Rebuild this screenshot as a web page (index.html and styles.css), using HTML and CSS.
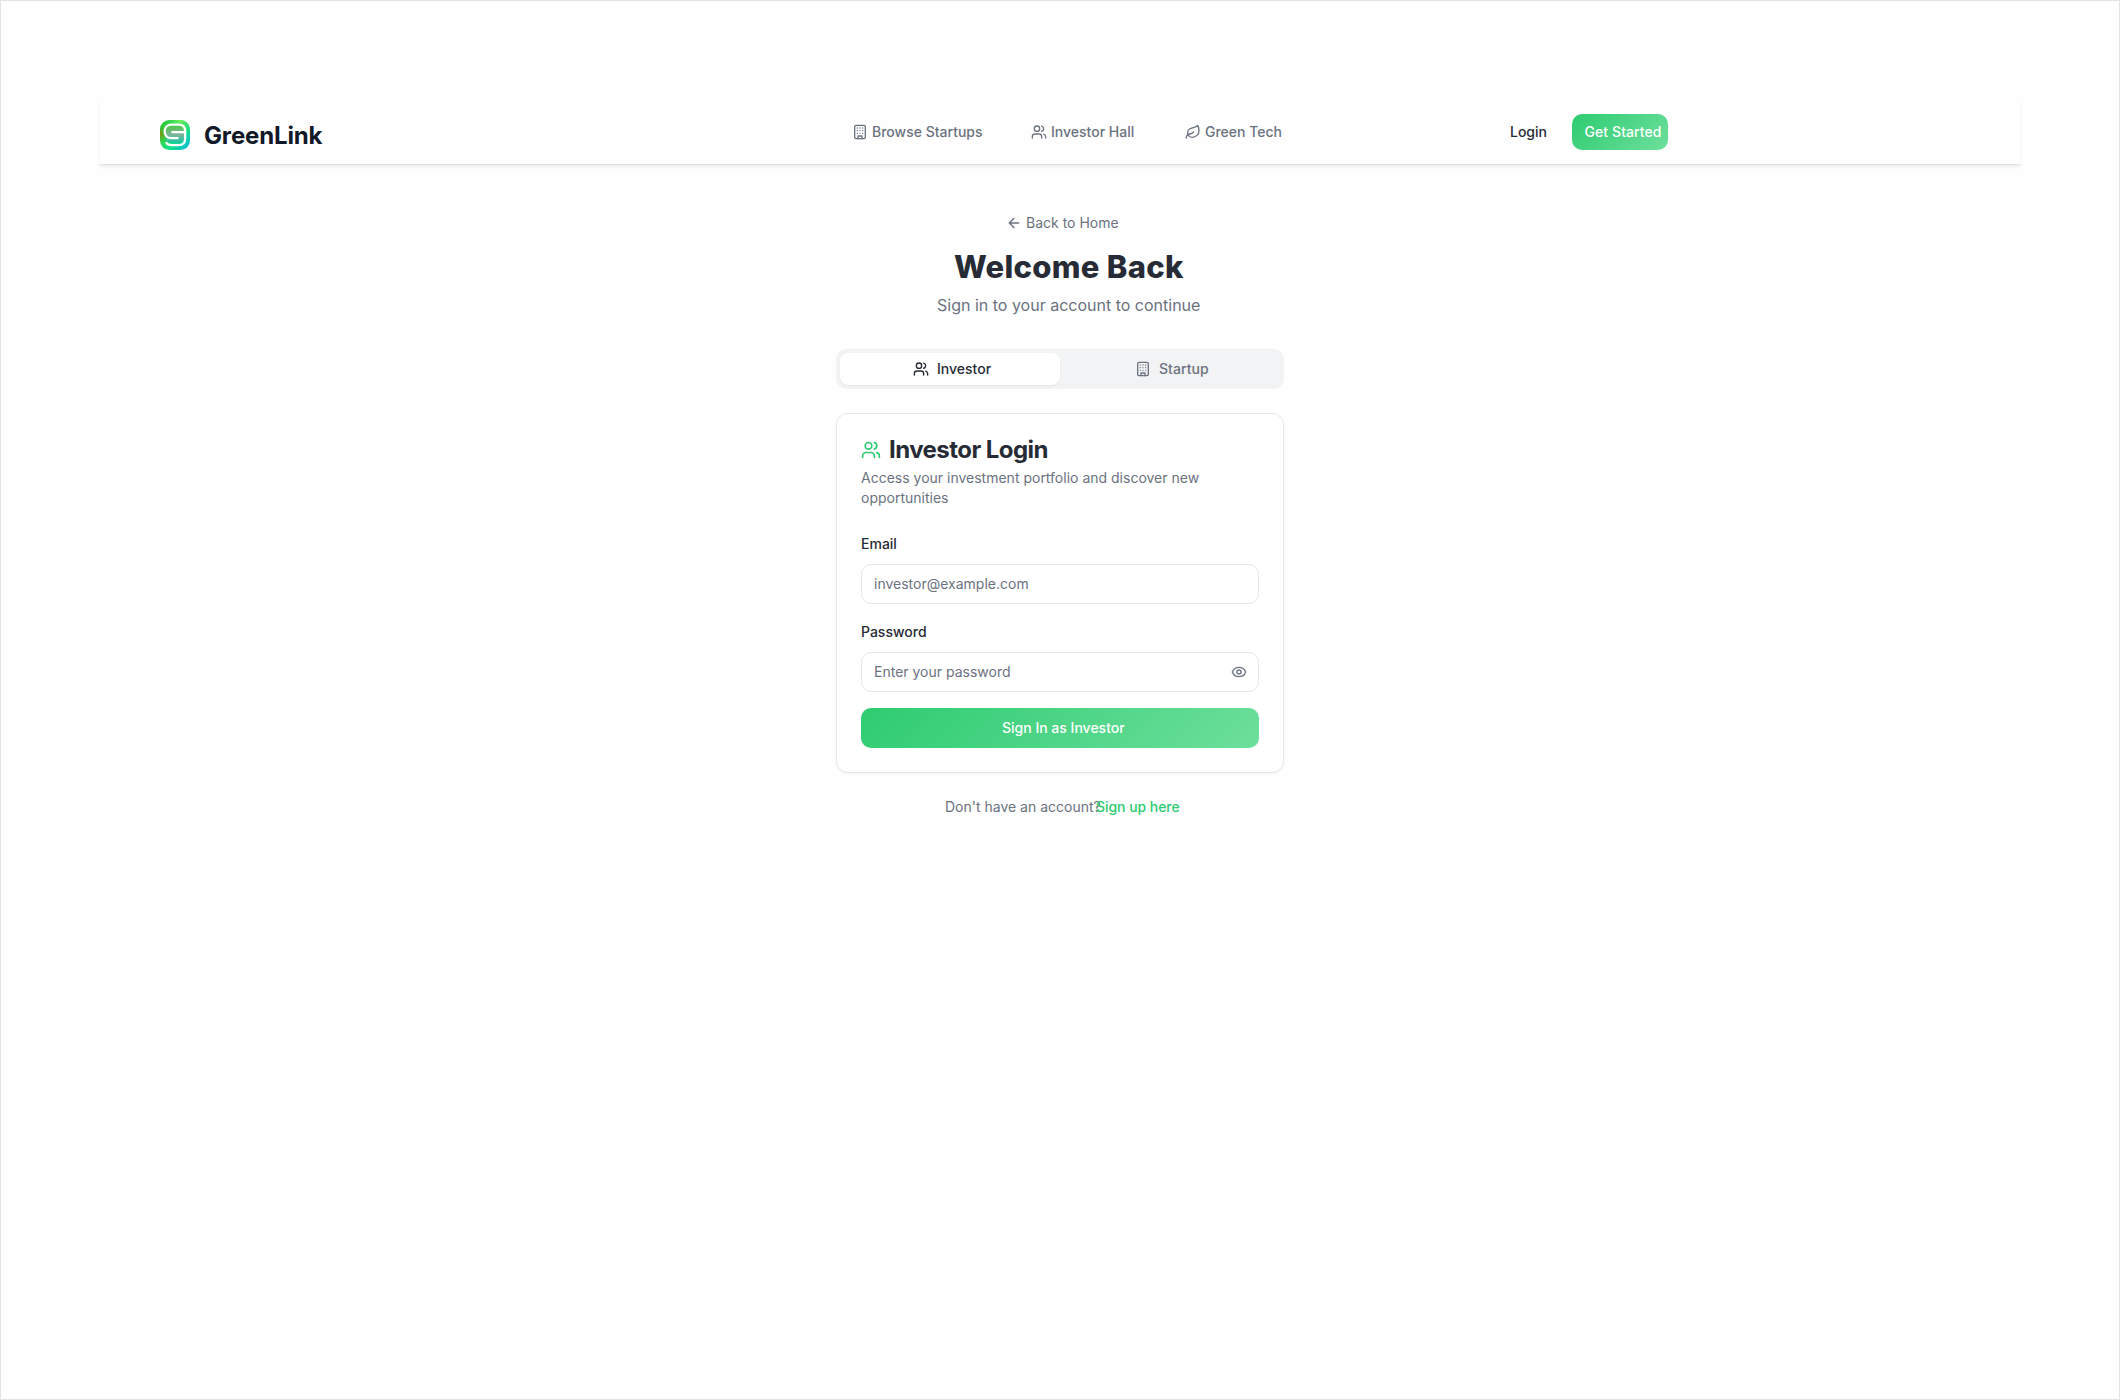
FILE: index.html
```html
<!DOCTYPE html>
<html lang="en">
<head>
<meta charset="utf-8">
<title>GreenLink – Login</title>
<link rel="stylesheet" href="styles.css">
</head>
<body>
<svg class="defs" width="0" height="0" aria-hidden="true">
  <symbol id="building" viewBox="0 0 24 24"><rect x="4" y="2" width="16" height="20" rx="2"/><path d="M9 22v-4h6v4M8 6h.01M16 6h.01M12 6h.01M12 10h.01M12 14h.01M16 10h.01M16 14h.01M8 10h.01M8 14h.01"/></symbol>
  <symbol id="users" viewBox="0 0 24 24"><path d="M16 21v-2a4 4 0 0 0-4-4H6a4 4 0 0 0-4 4v2"/><circle cx="9" cy="7" r="4"/><path d="M22 21v-2a4 4 0 0 0-3-3.87M16 3.13a4 4 0 0 1 0 7.75"/></symbol>
  <symbol id="leaf" viewBox="0 0 24 24"><path d="M11 20A7 7 0 0 1 9.8 6.1C15.5 5 17 4.48 19 2c1 2 2 4.18 2 8 0 5.5-4.78 10-10 10Z"/><path d="M2 21c0-3 1.85-5.36 5.08-6C9.5 14.52 12 13 13 12"/></symbol>
  <symbol id="arrow" viewBox="0 0 24 24"><path d="m12 19-7-7 7-7M19 12H5"/></symbol>
  <symbol id="eye" viewBox="0 0 24 24"><path d="M2.06 12.35a1 1 0 0 1 0-.7 10.75 10.75 0 0 1 19.88 0 1 1 0 0 1 0 .7 10.75 10.75 0 0 1-19.88 0"/><circle cx="12" cy="12" r="3"/></symbol>
</svg>
<div class="page">
  <header class="header">
    <div class="brand">
      <svg class="logo" viewBox="0 0 30 30">
        <defs>
          <linearGradient id="lg" x1="0" y1="0" x2="1" y2="1"><stop offset="0" stop-color="#24c22c"/><stop offset=".35" stop-color="#35d957"/><stop offset=".65" stop-color="#10e08a"/><stop offset="1" stop-color="#08b4f0"/></linearGradient>
          <linearGradient id="ls" x1="0" y1="0" x2="0" y2="1"><stop offset="0" stop-color="#4fc64a"/><stop offset=".5" stop-color="#7fb49a"/><stop offset="1" stop-color="#12c7a0"/></linearGradient>
          <radialGradient id="lo" cx="0" cy=".47" r=".35"><stop offset="0" stop-color="#8f8f10"/><stop offset="1" stop-color="#1fc02c" stop-opacity="0"/></radialGradient>
          <radialGradient id="lt" cx=".68" cy="0" r=".5"><stop offset="0" stop-color="#74f25c"/><stop offset="1" stop-color="#35e060" stop-opacity="0"/></radialGradient>
        </defs>
        <rect width="30" height="30" rx="9.5" fill="url(#lg)"/>
        <rect width="30" height="30" rx="9.5" fill="url(#lo)"/>
        <rect width="30" height="30" rx="9.5" fill="url(#lt)"/>
        <rect x="6" y="6" width="18" height="17" rx="5" fill="url(#ls)"/>
        <path d="M25.200 12.600V11C25.200 7 22.500 4.700 18.500 4.700H11.500C7.200 4.700 4.600 7.300 4.600 11.200S7.200 18.200 11 18.200H18.500M11.500 12.200H25.200V18.500C25.200 22.800 22.500 25.200 18.500 25.200H12C9 25.200 7 24.500 6 22.300" fill="none" stroke="#fff" stroke-width="2.300"/>
      </svg>
      <span class="brand-name">GreenLink</span>
    </div>
    <nav class="nav">
      <a class="nav-item"><svg class="icon"><use href="#building"/></svg><span>Browse Startups</span></a>
      <a class="nav-item"><svg class="icon"><use href="#users"/></svg><span>Investor Hall</span></a>
      <a class="nav-item"><svg class="icon"><use href="#leaf"/></svg><span>Green Tech</span></a>
    </nav>
    <div class="actions"><a class="login">Login</a><a class="start">Get Started</a></div>
  </header>
  <main class="main">
    <a class="back"><svg class="icon"><use href="#arrow"/></svg><span>Back to Home</span></a>
    <h1 class="title">Welcome Back</h1>
    <p class="subtitle">Sign in to your account to continue</p>
    <div class="tabs">
      <div class="tab active"><svg class="icon"><use href="#users"/></svg><span>Investor</span></div>
      <div class="tab"><svg class="icon"><use href="#building"/></svg><span>Startup</span></div>
    </div>
    <section class="card">
      <h2 class="card-title"><svg class="icon large"><use href="#users"/></svg><span>Investor Login</span></h2>
      <p class="desc">Access your investment portfolio and discover new<br>opportunities</p>
      <div class="label">Email</div>
      <div class="input"><span>investor@example.com</span></div>
      <div class="label">Password</div>
      <div class="input"><span>Enter your password</span><svg class="icon"><use href="#eye"/></svg></div>
      <div class="submit">Sign In as Investor</div>
    </section>
    <p class="signup"><span class="question">Don't have an account?</span><a class="link">Sign up here</a></p>
  </main>
</div>
</body>
</html>
```
FILE: styles.css
```css
* { box-sizing: border-box; }
body { margin: 0; background: #fefefe; color: #272b35; font: 14px/20px Inter, sans-serif; }
h1, h2, p { margin: 0; }
.defs { display: block; }
.page { height: 1400px; border: 1px solid #e3e3e3; padding: 99px; }
.icon { width: 16px; height: 16px; flex: none; fill: none; stroke: currentColor; stroke-width: 2; stroke-linecap: round; stroke-linejoin: round; }
.large { width: 20px; height: 20px; }

.header { display: flex; width: 1920px; height: 65px; padding-left: 60px; background: #fefefe; border-bottom: 1px solid #e2e3e8; box-shadow: 0 2px 3px rgba(0, 0, 0, .07); }
.brand { display: flex; width: 692px; padding-top: 20px; gap: 14px; }
.logo { width: 30px; height: 30px; }
.brand-name { font-size: 24px; line-height: 32px; font-weight: 700; letter-spacing: -.15px; color: #111827; white-space: nowrap; }
.nav { display: grid; grid-template-columns: 179px 154px 130px; height: 64px; align-items: center; font-weight: 500; color: #6b7280; }
.nav-item { display: flex; gap: 4px; align-items: center; white-space: nowrap; }
.actions { display: flex; align-items: center; height: 64px; padding-left: 195px; font-weight: 500; }
.login { width: 62px; }
.start { width: 96px; height: 36px; padding: 8px 0 8px 12.5px; border-radius: 10px; white-space: nowrap; letter-spacing: .08px; color: #fff; background: linear-gradient(135deg, #2ecc71, #6ddf9c); }

.main { width: 448px; margin: 0 auto; padding-top: 48px; }
.back { display: flex; align-items: center; gap: 4px; height: 20px; padding-left: 170px; color: #6b7280; }
.title { margin-top: 16px; padding-left: 118px; font-size: 31px; line-height: 36px; font-weight: 800; letter-spacing: .3px; white-space: nowrap; }
.subtitle { margin-top: 8px; padding-left: 101px; font-size: 16px; line-height: 24px; color: #6b7280; white-space: nowrap; }
.tabs { display: flex; height: 40px; margin-top: 32px; padding: 4px; border-radius: 10px; background: #f2f3f5; }
.tab { display: flex; flex: 1; gap: 8px; align-items: center; padding-left: 75px; font-weight: 500; letter-spacing: .05px; color: #6b7280; }
.tab.active { flex: 0 0 220px; padding-left: 73px; border-radius: 8px; letter-spacing: 0; color: #272b35; background: #fff; box-shadow: 0 1px 2px rgba(0, 0, 0, .06); }
.card { height: 360px; margin-top: 24px; padding: 24px; border: 1px solid #e5e7eb; border-radius: 12px; background: #fff; box-shadow: 0 1px 2px rgba(0, 0, 0, .05); }
.card-title { display: flex; align-items: center; gap: 8px; height: 24px; font-size: 24px; line-height: 24px; font-weight: 700; letter-spacing: -.55px; }
.card-title .icon { color: #2ecc71; }
.desc { margin-top: 6px; color: #6b7280; }
.label { height: 20px; margin-top: 26px; font-weight: 500; }
.input + .label { margin-top: 18px; }
.input { display: flex; align-items: center; justify-content: space-between; height: 40px; margin-top: 10px; padding: 0 11px 0 12px; border: 1px solid #e5e7eb; border-radius: 10px; color: #6b7280; }
.submit { height: 40px; margin-top: 16px; padding: 10px 0 10px 141px; border-radius: 10px; font-weight: 500; color: #fff; background: linear-gradient(135deg, #2ecc71, #6ddf9c); }
.signup { display: flex; margin-top: 24px; padding-left: 109px; white-space: nowrap; color: #6b7280; }
.question { width: 151px; }
.link { font-weight: 500; letter-spacing: -.05px; color: #2ecc71; }
```
